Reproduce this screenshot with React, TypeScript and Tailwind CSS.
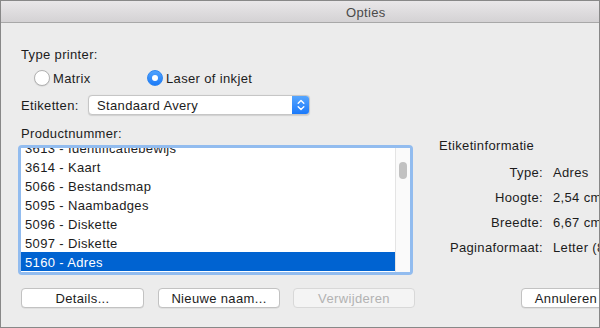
import React from 'react';

const rows = [
  '3613 - Identificatiebewijs',
  '3614 - Kaart',
  '5066 - Bestandsmap',
  '5095 - Naambadges',
  '5096 - Diskette',
  '5097 - Diskette',
  '5160 - Adres',
];

const info: [string, string][] = [
  ['Type:', 'Adres'],
  ['Hoogte:', '2,54 cm'],
  ['Breedte:', '6,67 cm'],
  ['Paginaformaat:', 'Letter (8,5 x 11 inch)'],
];

function Radio({ checked, label }: { checked?: boolean; label: string }) {
  return (
    <div className="flex items-center gap-[3px]">
      {checked ? (
        <span className="flex h-4 w-4 items-center justify-center rounded-full bg-gradient-to-b from-[#4fa2fd] to-[#1a7bf8] border border-[#2f86f0]">
          <span className="h-[6px] w-[6px] rounded-full bg-white" />
        </span>
      ) : (
        <span className="h-4 w-4 rounded-full bg-white border border-[#b2b2b2] shadow-[0_0.5px_1px_rgba(0,0,0,0.12)]" />
      )}
      <span className="pt-[1px]">{label}</span>
    </div>
  );
}

function Btn({ label, w, disabled }: { label: string; w: string; disabled?: boolean }) {
  return (
    <div
      className={
        'h-5 shrink-0 flex items-center justify-center pt-[1px] rounded-[4px] border ' +
        w +
        (disabled
          ? ' bg-[#f4f4f4] border-[#d8d8d8] text-[#b2b2b2]'
          : ' bg-white border-[#c2c2c2] text-[#1c1c1c] shadow-[0_0.5px_0.5px_rgba(0,0,0,0.1)]')
      }
    >
      {label}
    </div>
  );
}

export default function App() {
  return (
    <div
      className="w-[600px] h-[328px] overflow-hidden bg-[#ececec] border border-[#888888] flex flex-col text-[13px] leading-4 tracking-[0.35px] text-[#1c1c1c] whitespace-nowrap"
      style={{ fontFamily: '"Liberation Sans", Arial, sans-serif' }}
    >
      {/* title bar */}
      <div className="h-[22px] shrink-0 border-b border-[#a8a8a8] bg-gradient-to-b from-[#e9e7e9] to-[#d4d2d4] flex items-center pt-[2px] pl-[345px] text-[#4a4a4a]">
        Opties
      </div>

      <div className="flex flex-col pl-[20px]">
        <div className="mt-[24px] h-4">Type printer:</div>

        <div className="mt-[7px] h-4 flex items-center pl-[13px]">
          <div className="w-[113px]">
            <Radio label="Matrix" />
          </div>
          <Radio checked label="Laser of inkjet" />
        </div>

        <div className="mt-[9px] h-5 flex items-center">
          <span className="w-[67px] pt-[1px]">Etiketten:</span>
          <div className="w-[222px] h-5 flex rounded-[4px] bg-white border border-[#c6c6c6] shadow-[0_0.5px_1px_rgba(0,0,0,0.12)] overflow-hidden">
            <span className="flex-1 pl-[8px] pt-[1px] flex items-center">Standaard Avery</span>
            <span className="w-[17px] flex items-center justify-center bg-gradient-to-b from-[#55a5fe] to-[#1979fa]">
              <svg width="8" height="12" viewBox="0 0 8 12" fill="none" stroke="white" strokeWidth="1.4" strokeLinecap="round" strokeLinejoin="round">
                <path d="M1.2 4.2 L4 1.5 L6.8 4.2" />
                <path d="M1.2 7.8 L4 10.5 L6.8 7.8" />
              </svg>
            </span>
          </div>
        </div>

        <div className="mt-[11px] flex">
          <div className="flex flex-col shrink-0">
            <div className="h-4">Productnummer:</div>
            <div className="mt-[3px] -ml-[3px] w-[395px] h-[130px] rounded-[4px] bg-[#92bcef] p-[3px]">
              <div className="h-full flex bg-white overflow-hidden">
                <div className="flex-1 overflow-hidden">
                  <div className="-mt-[10px] flex flex-col">
                    {rows.map((r, i) => (
                      <div
                        key={r}
                        className={
                          'h-[19px] flex items-center pl-[4px] pt-[2px] ' +
                          (i === rows.length - 1 ? 'bg-[#0063d1] text-white' : '')
                        }
                      >
                        {r}
                      </div>
                    ))}
                  </div>
                </div>
                <div className="w-[15px] bg-[#fafafa] border-l border-[#e4e4e4] flex justify-center">
                  <div className="mt-[14px] w-[8px] h-[17px] rounded-full bg-[#c1c1c1]" />
                </div>
              </div>
            </div>
          </div>

          <div className="ml-[26px] mt-[12px] flex flex-col shrink-0">
            <div className="h-4">Etiketinformatie</div>
            <div className="mt-[6px] flex flex-col">
              {info.map(([k, v]) => (
                <div key={k} className="h-[25px] flex items-center pt-[1px]">
                  <span className="w-[104px] text-right">{k}</span>
                  <span className="ml-[10px]">{v}</span>
                </div>
              ))}
            </div>
          </div>
        </div>

        <div className="mt-[13px] flex">
          <Btn label="Details..." w="w-[123px]" />
          <div className="w-[14px] shrink-0" />
          <Btn label="Nieuwe naam..." w="w-[122px]" />
          <div className="w-[13px] shrink-0" />
          <Btn label="Verwijderen" disabled w="w-[122px]" />
          <div className="w-[106px] shrink-0" />
          <Btn label="Annuleren" w="w-[90px]" />
        </div>
      </div>
    </div>
  );
}
